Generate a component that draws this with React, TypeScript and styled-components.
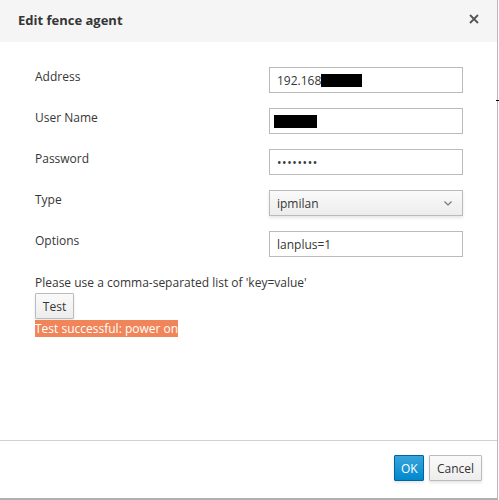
import React from "react";
import styled, { createGlobalStyle } from "styled-components";

const Global = createGlobalStyle`
  html, body { margin: 0; padding: 0; background: #fff; }
  body { font-family: "Open Sans", "Noto Sans", sans-serif; font-size: 12px; color: #363636; }
  * { box-sizing: border-box; }
`;

const Modal = styled.div`
  width: 498px;
  height: 500px;
  display: flex;
  flex-direction: column;
  border-right: 1px solid #b8b8b8;
  border-bottom: 2px solid #b0b0b0;
  background: #fff;
  position: relative;
`;

const Header = styled.div`
  height: 42px;
  flex: none;
  background: #f5f5f5;
  display: flex;
  align-items: center;
  justify-content: space-between;
  padding: 0 17px 2px 18px;
`;

const Title = styled.h4`
  margin: 0;
  font-size: 13px;
  font-weight: 700;
  color: #363636;
`;

const Close = styled.button`
  border: 0;
  background: none;
  padding: 0;
  width: 12px;
  height: 12px;
  display: flex;
  align-items: center;
  justify-content: center;
  margin-top: -3px;
  cursor: pointer;
`;

const Body = styled.div`
  flex: 1;
  padding: 25px 35px 0 35px;
  display: flex;
  flex-direction: column;
`;

const Form = styled.div`
  display: flex;
  flex-direction: column;
  gap: 15px;
`;

const Row = styled.div`
  display: grid;
  grid-template-columns: 234px 194px;
  align-items: center;
  height: 26px;
`;

const Label = styled.label`
  font-size: 12px;
  color: #363636;
  margin-top: -7px;
`;

const Input = styled.div<{ $pad?: number; $spacing?: number }>`
  height: 26px;
  border: 1px solid #bbb;
  background: #fff;
  padding: 0 7px 0 ${(p) => p.$pad ?? 7}px;
  letter-spacing: ${(p) => p.$spacing ?? 0}px;
  display: flex;
  align-items: center;
  font-size: 12px;
  color: #363636;
`;

const Redact = styled.span<{ $w: number }>`
  display: inline-block;
  width: ${(p) => p.$w}px;
  height: 13px;
  background: #000;
`;

const Select = styled.div`
  height: 26px;
  border: 1px solid #bbb;
  background: linear-gradient(#fafafa, #ededed);
  box-shadow: 0 2px 3px rgba(3, 3, 3, 0.1);
  padding: 0 10px 0 7px;
  display: flex;
  align-items: center;
  justify-content: space-between;
  font-size: 12px;
  color: #363636;
`;

const Help = styled.div`
  margin-top: 19px;
  font-size: 12px;
  line-height: 14px;
  color: #363636;
`;

const Btn = styled.button<{ $primary?: boolean; $w?: number }>`
  font-family: inherit;
  font-size: 12px;
  height: 26px;
  width: ${(p) => (p.$w ? `${p.$w}px` : "auto")};
  padding: 0 6px;
  border: 1px solid ${(p) => (p.$primary ? "#00659c" : "#bbb")};
  background: ${(p) =>
    p.$primary ? "linear-gradient(#39a5dc, #0088ce)" : "linear-gradient(#fafafa, #ededed)"};
  color: ${(p) => (p.$primary ? "#fff" : "#363636")};
  box-shadow: 0 2px 3px rgba(3, 3, 3, 0.1);
  border-radius: 1px;
`;

const TestBtn = styled(Btn)`
  align-self: flex-start;
  margin-top: 3px;
`;

const Success = styled.div`
  align-self: flex-start;
  margin-top: 1px;
  background: #f0855a;
  color: #fff;
  font-size: 12px;
  line-height: 17px;
  height: 17px;
`;

const Footer = styled.div`
  height: 58px;
  flex: none;
  border-top: 1px solid #d1d1d1;
  display: flex;
  justify-content: flex-end;
  align-items: flex-start;
  gap: 5px;
  padding: 14px 15px 0 0;
`;

const Tick = styled.span`
  position: absolute;
  right: -2px;
  top: 100px;
  width: 3px;
  height: 1px;
  background: #000;
`;

export default function App() {
  return (
    <>
      <Global />
      <Modal>
        <Header>
          <Title>Edit fence agent</Title>
          <Close aria-label="Close">
            <svg width="10" height="10" viewBox="0 0 10 10">
              <path d="M1 1L9 9M9 1L1 9" stroke="#555" strokeWidth="1.8" />
            </svg>
          </Close>
        </Header>
        <Body>
          <Form>
            <Row>
              <Label>Address</Label>
              <Input>
                192.168<Redact $w={41} />
              </Input>
            </Row>
            <Row>
              <Label>User Name</Label>
              <Input $pad={4}>
                <Redact $w={43} />
              </Input>
            </Row>
            <Row>
              <Label>Password</Label>
              <Input $spacing={0.6}>••••••••</Input>
            </Row>
            <Row>
              <Label>Type</Label>
              <Select>
                <span>ipmilan</span>
                <svg width="8" height="5" viewBox="0 0 8 5">
                  <path d="M0.5 0.5L4 4L7.5 0.5" stroke="#777" strokeWidth="1.2" fill="none" />
                </svg>
              </Select>
            </Row>
            <Row>
              <Label>Options</Label>
              <Input>lanplus=1</Input>
            </Row>
          </Form>
          <Help>Please use a comma-separated list of 'key=value'</Help>
          <TestBtn $w={39}>Test</TestBtn>
          <Success>Test successful: power on</Success>
        </Body>
        <Footer>
          <Btn $primary $w={30}>OK</Btn>
          <Btn $w={53}>Cancel</Btn>
        </Footer>
        <Tick />
      </Modal>
    </>
  );
}
